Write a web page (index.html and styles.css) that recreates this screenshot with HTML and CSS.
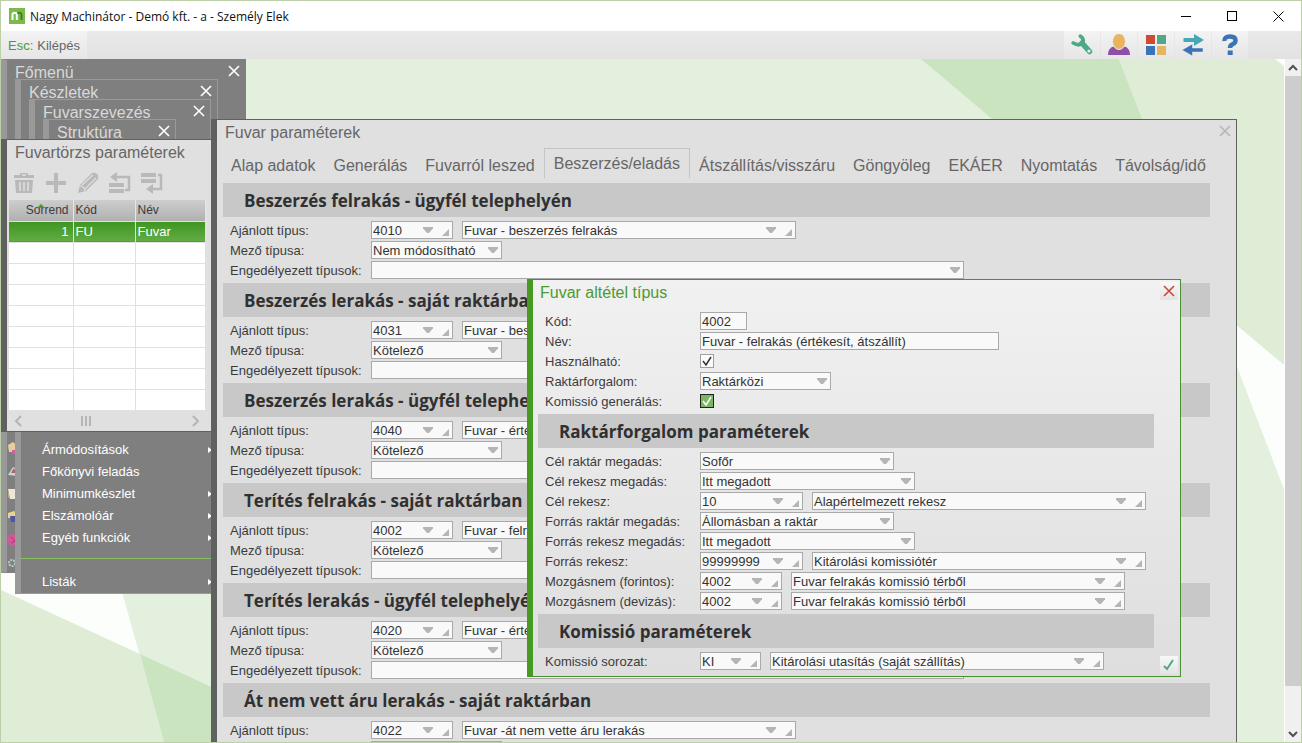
FILE: index.html
```html
<!DOCTYPE html>
<html lang="hu">
<head>
    <meta charset="UTF-8">
    <title>Nagy Machinátor - Demó kft.</title>
    <link rel="stylesheet" href="styles.css">
</head>
<body>
    <div class="app">
        <header class="titlebar">
            <svg class="logo" width="16" height="16" viewBox="0 0 16 16">
                <rect width="16" height="16" fill="#7dba4c"/>
                <path d="M3.500 12V7Q3.500 4.800 5.500 4.800Q7.800 4.800 7.800 7V12" fill="none" stroke="#fff" stroke-width="2"/>
                <path d="M8.500 5.500Q9.500 4.800 10.300 4.800Q12.500 4.800 12.500 7V12" fill="none" stroke="#3c8420" stroke-width="2"/>
            </svg>
            <span class="app-name">Nagy Machinátor - Demó kft. - a - Személy Elek</span>
            <button class="win-btn" aria-label="Kis méret"><svg width="11" height="11"><path d="M0 5.500H10" stroke="#000"/></svg></button>
            <button class="win-btn" aria-label="Teljes méret"><svg width="11" height="11"><rect x=".5" y=".5" width="9" height="9" fill="none" stroke="#000"/></svg></button>
            <button class="win-btn" aria-label="Bezárás"><svg width="11" height="11"><path d="M.5 .5L10.500 10.500M10.500 .5L.5 10.500" stroke="#000"/></svg></button>
        </header>

        <div class="toolbar">
            <button class="exit"><span class="key">Esc:</span> Kilépés</button>
            <div class="tools">
                <button class="tool" aria-label="Eszközök">
                    <svg width="22" height="22" viewBox="0 0 22 22">
                        <path d="M9.500 2.200Q13.500 5 11.500 9Q8 12.500 2.300 9" fill="none" stroke="#4fa987" stroke-width="3.800" stroke-linecap="round"/>
                        <path d="M11 9L18.500 17.500" fill="none" stroke="#4fa987" stroke-width="5.500" stroke-linecap="round"/>
                        <circle cx="18" cy="17" r="1.600" fill="#eee"/>
                    </svg>
                </button>
                <button class="tool" aria-label="Felhasználó">
                    <svg width="22" height="22" viewBox="0 0 22 22">
                        <path d="M0 21Q0 14 5.500 12.500L16.500 12.500Q22 14 22 21Z" fill="#8e4fa8"/>
                        <ellipse cx="11" cy="7.500" rx="6.500" ry="8" fill="#e9b45f" stroke="#eee"/>
                    </svg>
                </button>
                <button class="tool" aria-label="Ablakok">
                    <svg width="22" height="22" viewBox="0 0 22 22">
                        <rect x="1" y="1" width="9" height="9" fill="#cd4a33"/>
                        <rect x="12" y="1" width="9" height="9" fill="#4fa987"/>
                        <rect x="1" y="12" width="9" height="9" fill="#3b74b5"/>
                        <rect x="12" y="12" width="9" height="9" fill="#e9b45f"/>
                    </svg>
                </button>
                <button class="tool" aria-label="Váltás">
                    <svg width="22" height="22" viewBox="0 0 22 22">
                        <path d="M1.500 4H12V0L22 6L12 12V8H1.500Z" fill="#47a8b5"/>
                        <path d="M21 14H10.500V10L0 16L10.500 22V18H21Z" fill="#3b74b5" stroke="#eee" stroke-width=".5"/>
                    </svg>
                </button>
                <button class="tool" aria-label="Súgó">
                    <svg width="22" height="22" viewBox="0 0 22 22">
                        <path d="M5.500 7Q5 2.500 11 2.500Q16.500 2.500 16.500 6.500Q16.500 9 13.500 10.300Q11 11.500 11 14" fill="none" stroke="#3b74b5" stroke-width="4.500"/>
                        <rect x="8.700" y="16.500" width="5" height="4.500" fill="#3b74b5"/>
                    </svg>
                </button>
            </div>
        </div>

        <div class="workspace">
            <main class="desktop">
                <svg class="wallpaper" viewBox="0 0 1283 683" preserveAspectRatio="none">
                    <rect width="1283" height="683" fill="#fcfefb"/>
                    <path d="M0 0H1118L1380 683H163L-28 0Z" fill="#e3f0de"/>
                    <path d="M1118 0H1274L1283 7V306L1213 247Z" fill="#dfedd7"/>
                    <path d="M920 0H1118L1213 247Z" fill="#cbe4c0"/>
                    <path d="M0 531L139 595L163 683H0Z" fill="#dfedd7"/>
                    <path d="M139 595L330 683H163Z" fill="#cbe4c0"/>
                </svg>

                <section class="menu menu-main">
                    <h2>Főmenü</h2>
                    <button class="close" aria-label="Bezárás"><svg width="12" height="12"><path d="M1 1L11 11M11 1L1 11"/></svg></button>
                    <div class="menu-icons">
                        <svg width="12" height="12"><path d="M1 3L6 0L11 4V10H2Z" fill="#e5cf9a"/><path d="M5 8H12V12H5Z" fill="#d25fa5"/></svg>
                        <svg width="12" height="12"><path d="M1 10L6 2L11 4V11Z" fill="#c9d3dc"/><path d="M4 8L7 3L9 8Z" fill="#a8665a"/></svg>
                        <svg width="12" height="12"><path d="M1 1H11V11H3Z" fill="#ece7d8"/><path d="M1 1L3 11L1 9Z" fill="#c7ab75"/></svg>
                        <svg width="12" height="12"><path d="M1 2L7 0L11 3V7H1Z" fill="#e6d38c"/><path d="M3 5H12V11H4Z" fill="#4a58a5"/></svg>
                        <svg width="12" height="12"><circle cx="6" cy="6" r="6" fill="#d3589b"/><path d="M4 3L8 7L4 9" stroke="#b2346f" fill="none"/></svg>
                        <svg width="12" height="12"><circle cx="5" cy="6" r="3" fill="none" stroke="#b7c9c9" stroke-width="2" stroke-dasharray="2 1"/></svg>
                    </div>
                </section>

                <section class="menu menu-stock">
                    <h2>Készletek</h2>
                    <button class="close" aria-label="Bezárás"><svg width="12" height="12"><path d="M1 1L11 11M11 1L1 11"/></svg></button>
                    <nav>
                        <a class="sub" href="#">Ármódosítások</a>
                        <a href="#">Főkönyvi feladás</a>
                        <a class="sub" href="#">Minimumkészlet</a>
                        <a class="sub" href="#">Elszámolóár</a>
                        <a class="sub" href="#">Egyéb funkciók</a>
                        <hr>
                        <a class="sub" href="#">Listák</a>
                    </nav>
                </section>

                <section class="menu menu-freight">
                    <h2>Fuvarszevezés</h2>
                    <button class="close" aria-label="Bezárás"><svg width="12" height="12"><path d="M1 1L11 11M11 1L1 11"/></svg></button>
                </section>

                <section class="menu menu-structure">
                    <h2>Struktúra</h2>
                    <button class="close" aria-label="Bezárás"><svg width="12" height="12"><path d="M1 1L11 11M11 1L1 11"/></svg></button>
                </section>

                <section class="window list-window">
                    <h2>Fuvartörzs paraméterek</h2>
                    <div class="list-tools">
                        <button aria-label="Törlés"><svg width="22" height="22" viewBox="0 0 22 22"><path d="M7 1H15V3H21V6H1V3H7Z M2 8H20L19 21H3Z" fill="#b9b9b9"/><path d="M9 3H13M7 10V19M11 10V19M15 10V19" stroke="#dfdfdf" stroke-width="1.500"/></svg></button>
                        <button aria-label="Új"><svg width="22" height="22" viewBox="0 0 22 22"><path d="M11 1V21M1 11H21" stroke="#b9b9b9" stroke-width="4"/></svg></button>
                        <button aria-label="Módosítás"><svg width="22" height="22" viewBox="0 0 22 22"><path d="M1 21L3 13L15 1Q18 0 20 2Q22 4 21 7L9 19Z" fill="#b9b9b9"/><path d="M5 13L16 3M8 17L19 6M3 14Q7 14 8 19" fill="none" stroke="#dfdfdf" stroke-width="1.200"/></svg></button>
                        <button aria-label="Fel"><svg width="22" height="22" viewBox="0 0 22 22"><path d="M0 11H15V15H0ZM0 17H15V21H0Z" fill="#b9b9b9"/><path d="M6 5H20V18H16" fill="none" stroke="#b9b9b9" stroke-width="2.500"/><path d="M1 5L8 0V10Z" fill="#b9b9b9"/></svg></button>
                        <button aria-label="Le"><svg width="22" height="22" viewBox="0 0 22 22"><path d="M0 1H15V5H0ZM0 7H15V11H0Z" fill="#b9b9b9"/><path d="M17 3H20V17H10" fill="none" stroke="#b9b9b9" stroke-width="2.500"/><path d="M5 17L12 12V22Z" fill="#b9b9b9"/></svg></button>
                    </div>
                    <table>
                        <thead>
                            <tr><th class="num sorted">Sorrend</th><th class="code-col">Kód</th><th>Név</th></tr>
                        </thead>
                        <tbody>
                            <tr class="selected"><td class="num">1</td><td>FU</td><td>Fuvar</td></tr>
                            <tr><td></td><td></td><td></td></tr>
                            <tr><td></td><td></td><td></td></tr>
                            <tr><td></td><td></td><td></td></tr>
                            <tr><td></td><td></td><td></td></tr>
                            <tr><td></td><td></td><td></td></tr>
                            <tr><td></td><td></td><td></td></tr>
                            <tr><td></td><td></td><td></td></tr>
                            <tr><td></td><td></td><td></td></tr>
                        </tbody>
                    </table>
                    <div class="hscroll">
                        <svg width="8" height="12"><path d="M7 1L2 6L7 11"/></svg>
                        <svg class="grip" width="10" height="12"><path d="M1 1V11M5 1V11M9 1V11"/></svg>
                        <svg width="8" height="12"><path d="M1 1L6 6L1 11"/></svg>
                    </div>
                </section>

                <section class="window params-window">
                    <h2>Fuvar paraméterek</h2>
                    <button class="close" aria-label="Bezárás"><svg width="12" height="12"><path d="M1 1L11 11M11 1L1 11"/></svg></button>
                    <nav class="tabs">
                        <a href="#">Alap adatok</a>
                        <a href="#">Generálás</a>
                        <a href="#">Fuvarról leszed</a>
                        <a class="active" href="#">Beszerzés/eladás</a>
                        <a href="#">Átszállítás/visszáru</a>
                        <a href="#">Göngyöleg</a>
                        <a href="#">EKÁER</a>
                        <a href="#">Nyomtatás</a>
                        <a href="#">Távolság/idő</a>
                    </nav>
                    <form class="form">
                        <h3>Beszerzés felrakás - ügyfél telephelyén</h3>
                        <div class="rows">
                            <div class="row">
                                <label for="type1">Ajánlott típus:</label>
                                <span class="field lookup w-code"><select id="type1"><option>4010</option></select></span>
                                <span class="field lookup w-name"><select aria-label="Megnevezés"><option>Fuvar - beszerzés felrakás</option></select></span>
                            </div>
                            <div class="row">
                                <label for="mode1">Mező típusa:</label>
                                <span class="field pick w-mode"><select id="mode1"><option>Nem módosítható</option></select></span>
                            </div>
                            <div class="row">
                                <label for="allowed1">Engedélyezett típusok:</label>
                                <span class="field pick w-allowed"><select id="allowed1"><option></option></select></span>
                            </div>
                        </div>

                        <h3>Beszerzés lerakás - saját raktárban</h3>
                        <div class="rows">
                            <div class="row">
                                <label for="type2">Ajánlott típus:</label>
                                <span class="field lookup w-code"><select id="type2"><option>4031</option></select></span>
                                <span class="field lookup w-name"><select aria-label="Megnevezés"><option>Fuvar - beszerzés lerakás</option></select></span>
                            </div>
                            <div class="row">
                                <label for="mode2">Mező típusa:</label>
                                <span class="field pick w-mode"><select id="mode2"><option>Kötelező</option></select></span>
                            </div>
                            <div class="row">
                                <label for="allowed2">Engedélyezett típusok:</label>
                                <span class="field pick w-allowed"><select id="allowed2"><option></option></select></span>
                            </div>
                        </div>

                        <h3>Beszerzés lerakás - ügyfél telephelyén</h3>
                        <div class="rows">
                            <div class="row">
                                <label for="type3">Ajánlott típus:</label>
                                <span class="field lookup w-code"><select id="type3"><option>4040</option></select></span>
                                <span class="field lookup w-name"><select aria-label="Megnevezés"><option>Fuvar - értékesítés lerakás</option></select></span>
                            </div>
                            <div class="row">
                                <label for="mode3">Mező típusa:</label>
                                <span class="field pick w-mode"><select id="mode3"><option>Kötelező</option></select></span>
                            </div>
                            <div class="row">
                                <label for="allowed3">Engedélyezett típusok:</label>
                                <span class="field pick w-allowed"><select id="allowed3"><option></option></select></span>
                            </div>
                        </div>

                        <h3>Terítés felrakás - saját raktárban</h3>
                        <div class="rows">
                            <div class="row">
                                <label for="type4">Ajánlott típus:</label>
                                <span class="field lookup w-code"><select id="type4"><option>4002</option></select></span>
                                <span class="field lookup w-name"><select aria-label="Megnevezés"><option>Fuvar - felrakás (értékesít, átszállít)</option></select></span>
                            </div>
                            <div class="row">
                                <label for="mode4">Mező típusa:</label>
                                <span class="field pick w-mode"><select id="mode4"><option>Kötelező</option></select></span>
                            </div>
                            <div class="row">
                                <label for="allowed4">Engedélyezett típusok:</label>
                                <span class="field pick w-allowed"><select id="allowed4"><option></option></select></span>
                            </div>
                        </div>

                        <h3>Terítés lerakás - ügyfél telephelyén</h3>
                        <div class="rows">
                            <div class="row">
                                <label for="type5">Ajánlott típus:</label>
                                <span class="field lookup w-code"><select id="type5"><option>4020</option></select></span>
                                <span class="field lookup w-name"><select aria-label="Megnevezés"><option>Fuvar - értékesítés lerakás</option></select></span>
                            </div>
                            <div class="row">
                                <label for="mode5">Mező típusa:</label>
                                <span class="field pick w-mode"><select id="mode5"><option>Kötelező</option></select></span>
                            </div>
                            <div class="row">
                                <label for="allowed5">Engedélyezett típusok:</label>
                                <span class="field pick w-allowed"><select id="allowed5"><option></option></select></span>
                            </div>
                        </div>

                        <h3>Át nem vett áru lerakás - saját raktárban</h3>
                        <div class="rows">
                            <div class="row">
                                <label for="type6">Ajánlott típus:</label>
                                <span class="field lookup w-code"><select id="type6"><option>4022</option></select></span>
                                <span class="field lookup w-name"><select aria-label="Megnevezés"><option>Fuvar -át nem vette áru lerakás</option></select></span>
                            </div>
                            <div class="row">
                                <label for="mode6">Mező típusa:</label>
                                <span class="field pick w-mode"><select id="mode6"><option>Kötelező</option></select></span>
                            </div>
                        </div>
                    </form>
                </section>

                <section class="window popup">
                    <h2>Fuvar altétel típus</h2>
                    <button class="close" aria-label="Bezárás"><svg width="12" height="12"><path d="M1 1L11 11M11 1L1 11"/></svg></button>
                    <form class="form">
                        <div class="rows">
                            <div class="row">
                                <label for="code">Kód:</label>
                                <span class="field w-short"><input id="code" type="text" value="4002"></span>
                            </div>
                            <div class="row">
                                <label for="name">Név:</label>
                                <span class="field w-title"><input id="name" type="text" value="Fuvar - felrakás (értékesít, átszállít)"></span>
                            </div>
                            <div class="row">
                                <label for="usable">Használható:</label>
                                <span class="check"><input id="usable" type="checkbox" checked><svg width="14" height="14"><path d="M3 7L6 11L11 3"/></svg></span>
                            </div>
                            <div class="row">
                                <label for="traffic">Raktárforgalom:</label>
                                <span class="field pick w-mode"><select id="traffic"><option>Raktárközi</option></select></span>
                            </div>
                            <div class="row">
                                <label for="commission">Komissió generálás:</label>
                                <span class="check focus"><input id="commission" type="checkbox" checked><svg width="14" height="14"><path d="M3 7L6 11L11 3"/></svg></span>
                            </div>
                        </div>

                        <h3>Raktárforgalom paraméterek</h3>
                        <div class="rows">
                            <div class="row">
                                <label for="target-store">Cél raktár megadás:</label>
                                <span class="field pick w-store"><select id="target-store"><option>Sofőr</option></select></span>
                            </div>
                            <div class="row">
                                <label for="target-bin-mode">Cél rekesz megadás:</label>
                                <span class="field pick w-bin"><select id="target-bin-mode"><option>Itt megadott</option></select></span>
                            </div>
                            <div class="row">
                                <label for="target-bin">Cél rekesz:</label>
                                <span class="field lookup w-long-code"><select id="target-bin"><option>10</option></select></span>
                                <span class="field lookup w-name"><select aria-label="Megnevezés"><option>Alapértelmezett rekesz</option></select></span>
                            </div>
                            <div class="row">
                                <label for="source-store">Forrás raktár megadás:</label>
                                <span class="field pick w-store"><select id="source-store"><option>Állomásban a raktár</option></select></span>
                            </div>
                            <div class="row">
                                <label for="source-bin-mode">Forrás rekesz megadás:</label>
                                <span class="field pick w-bin"><select id="source-bin-mode"><option>Itt megadott</option></select></span>
                            </div>
                            <div class="row">
                                <label for="source-bin">Forrás rekesz:</label>
                                <span class="field lookup w-long-code"><select id="source-bin"><option>99999999</option></select></span>
                                <span class="field lookup w-name"><select aria-label="Megnevezés"><option>Kitárolási komissiótér</option></select></span>
                            </div>
                            <div class="row">
                                <label for="move-huf">Mozgásnem (forintos):</label>
                                <span class="field lookup w-code"><select id="move-huf"><option>4002</option></select></span>
                                <span class="field lookup w-name"><select aria-label="Megnevezés"><option>Fuvar felrakás komissió térből</option></select></span>
                            </div>
                            <div class="row">
                                <label for="move-fx">Mozgásnem (devizás):</label>
                                <span class="field lookup w-code"><select id="move-fx"><option>4002</option></select></span>
                                <span class="field lookup w-name"><select aria-label="Megnevezés"><option>Fuvar felrakás komissió térből</option></select></span>
                            </div>
                        </div>

                        <h3>Komissió paraméterek</h3>
                        <div class="rows">
                            <div class="row">
                                <label for="series">Komissió sorozat:</label>
                                <span class="field lookup w-series"><select id="series"><option>KI</option></select></span>
                                <span class="field lookup w-name"><select aria-label="Megnevezés"><option>Kitárolási utasítás (saját szállítás)</option></select></span>
                            </div>
                        </div>
                    </form>
                    <button class="ok" aria-label="Rendben"><svg width="12" height="12"><path d="M1 7L4 10L10 1" fill="none" stroke="#4fa987" stroke-width="2"/></svg></button>
                </section>
            </main>

            <div class="vscroll">
                <button aria-label="Fel"><svg width="10" height="8"><path d="M1 6L5 2L9 6"/></svg></button>
                <div class="track"><div class="thumb"></div></div>
                <button aria-label="Le"><svg width="10" height="8"><path d="M1 2L5 6L9 2"/></svg></button>
            </div>
        </div>
    </div>
</body>
</html>
```

FILE: styles.css
```css
* {
    box-sizing: border-box;
}
body {
    margin: 0;
    font-family: "Liberation Sans", Arial, sans-serif;
    font-size: 13px;
    color: #3c3c3c;
}
button {
    padding: 0;
    border: none;
    background: none;
    font: inherit;
    color: inherit;
    display: flex;
    align-items: center;
    justify-content: center;
}
a {
    color: inherit;
    text-decoration: none;
}
h2, h3 {
    margin: 0;
}
.app {
    display: flex;
    flex-direction: column;
    height: 100vh;
    border: 1px solid #bccfa9;
    overflow: hidden;
}

/* title bar */
.titlebar {
    display: flex;
    align-items: center;
    flex: none;
    height: 30px;
    padding-left: 8px;
    background-color: #fff;
}
.app-name {
    flex: 1;
    margin-left: 5px;
    font-family: "Open Sans", sans-serif;
    font-size: 12px;
    color: #111;
}
.win-btn {
    width: 46px;
    height: 30px;
}

/* toolbar */
.toolbar {
    display: flex;
    justify-content: space-between;
    flex: none;
    height: 28px;
    padding-right: 53px;
    background: linear-gradient(#e9e9e9, #e2e2e2);
}
.exit {
    gap: 4px;
    padding: 0 7px;
    color: #666;
    background: linear-gradient(#f3f3f3, #e6e6e6);
}
.key {
    color: #4b9a31;
}
.tools {
    display: flex;
    gap: 1px;
}
.tool {
    width: 36px;
    background: linear-gradient(#f3f3f3, #e6e6e6);
}

/* desktop */
.workspace {
    display: flex;
    flex: 1;
    min-height: 0;
}
.desktop {
    position: relative;
    flex: 1;
    overflow: hidden;
}
.wallpaper {
    position: absolute;
    width: 100%;
    height: 100%;
}

/* cascading menus */
.menu {
    position: absolute;
    background-color: #7f7f7f;
    border: 1px solid #999;
    border-left-width: 6px;
    color: #fff;
}
.menu h2 {
    padding-left: 8px;
    font-size: 16px;
    font-weight: normal;
    line-height: 26px;
    color: #d9d9d9;
}
.close {
    position: absolute;
    top: 2px;
    right: 2px;
    width: 18px;
    height: 18px;
}
.close path {
    fill: none;
    stroke: #fff;
    stroke-width: 1.6;
}
.menu-main {
    left: 0;
    top: 0;
    width: 245px;
    height: 514px;
    border-color: #7f7f7f;
    border-left-color: #999;
}
.menu-stock {
    left: 14px;
    top: 20px;
    width: 203px;
}
.menu-freight {
    left: 28px;
    top: 40px;
    width: 182px;
    height: 60px;
}
.menu-structure {
    left: 42px;
    top: 60px;
    width: 133px;
    height: 40px;
}
.menu-icons {
    display: grid;
    gap: 11px;
    padding-top: 356px;
}
.menu nav {
    padding: 333px 5px 0 21px;
    line-height: 22px;
}
.menu nav a {
    display: block;
}
.menu nav .sub::after {
    content: "";
    float: right;
    margin-top: 8px;
    border: 3px solid transparent;
    border-left: 4px solid #fff;
    border-right: 0;
}
.menu hr {
    height: 1px;
    margin: 9px -5px 12px -21px;
    border: none;
    background-color: #86c264;
}

/* windows */
.window {
    position: absolute;
    background-color: #e0e0e0;
    border: 1px solid #5f615e;
    border-left-width: 6px;
}
.window h2 {
    font-size: 16px;
    font-weight: normal;
    line-height: 26px;
    padding-left: 8px;
    color: #666;
}

.list-window {
    left: 0;
    top: 80px;
    width: 211px;
}
.list-tools {
    display: flex;
    gap: 10px;
    padding: 6px;
}
.list-window table {
    width: 197px;
    margin-left: 2px;
    border-collapse: collapse;
    table-layout: fixed;
    background-color: #fff;
}
.list-window th {
    height: 21px;
    padding: 0 2px;
    font-size: 12px;
    font-weight: normal;
    text-align: left;
    border-right: 1px solid #e6e6e6;
    background: linear-gradient(#cdcdcd, #b0b0b0);
}
.list-window td {
    height: 21px;
    padding: 0 2px;
    border: 1px solid #e0e0e0;
    border-left: none;
}
.list-window .num {
    width: 64px;
    padding-right: 4px;
    text-align: right;
}
.list-window .code-col {
    width: 62px;
}
.sorted {
    position: relative;
}
.sorted::before {
    content: "";
    position: absolute;
    top: 4px;
    left: 28px;
    border: 4px solid transparent;
    border-top: none;
    border-bottom-color: #479a21;
}
.selected td {
    color: #fff;
    background: linear-gradient(#3f9421, #62ad45);
}
.hscroll {
    display: flex;
    align-items: center;
    justify-content: space-between;
    height: 20px;
    padding: 0 11px 0 7px;
}
.hscroll path {
    fill: none;
    stroke: #b5b5b5;
    stroke-width: 2;
}
.grip {
    margin-right: 42px;
}

.params-window {
    left: 210px;
    top: 60px;
    right: 47px;
    bottom: 0;
    border-bottom: none;
    overflow: hidden;
}
.params-window .close path {
    stroke: #b5b5b5;
}
.tabs {
    display: flex;
    height: 30px;
    margin: 2px 0 5px 5px;
    font-size: 16px;
    line-height: 36px;
    color: #666;
    white-space: nowrap;
}
.tabs a {
    padding: 0 9px;
}
.tabs .active {
    line-height: 30px;
    border: 1px solid #c4c4c4;
    border-bottom: none;
}

/* forms */
.form {
    padding: 0 26px 0 6px;
}
.form h3 {
    height: 34px;
    padding-left: 21px;
    font-family: "Open Sans", sans-serif;
    font-size: 17px;
    font-weight: bold;
    line-height: 36px;
    color: #303030;
    background-color: #c8c8c8;
}
.rows {
    display: grid;
    gap: 2px;
    padding: 4px 0 4px 7px;
}
.row {
    display: flex;
    gap: 9px;
    height: 18px;
    line-height: 20px;
    white-space: nowrap;
}
.row label {
    width: 132px;
}
.field {
    position: relative;
    display: flex;
    border: 1px solid #a9a9a9;
    background-color: #f9f9f9;
}
.field select,
.field input {
    appearance: none;
    width: 100%;
    padding: 2px 1px 0;
    border: none;
    border-radius: 0;
    outline: none;
    background: none;
    font: inherit;
    line-height: 14px;
    color: #333;
}
.pick::after,
.lookup::before {
    content: "";
    position: absolute;
    top: 5px;
    right: 3px;
    width: 10px;
    height: 6px;
    background-color: #b5b5b5;
    clip-path: polygon(0 0, 100% 0, 100% 20%, 60% 100%, 40% 100%, 0 20%);
    pointer-events: none;
}
.lookup::before {
    right: 19px;
}
.lookup::after {
    content: "";
    position: absolute;
    right: 3px;
    bottom: 2px;
    width: 7px;
    height: 7px;
    background-color: #b5b5b5;
    clip-path: polygon(100% 0, 100% 100%, 0 100%);
    pointer-events: none;
}
.w-short { width: 47px; }
.w-series { width: 61px; }
.w-code { width: 82px; }
.w-long-code { width: 103px; }
.w-mode { width: 131px; }
.w-store { width: 194px; }
.w-bin { width: 215px; }
.w-title { width: 299px; }
.w-name { width: 334px; }
.w-allowed { width: 593px; }

.check {
    position: relative;
    display: flex;
    align-self: center;
    width: 14px;
    height: 14px;
}
.check input {
    appearance: none;
    width: 14px;
    height: 14px;
    margin: 0;
    border: 1px solid #a0a0a0;
    background-color: #fbfbfb;
}
.check svg {
    position: absolute;
    pointer-events: none;
}
.check path {
    fill: none;
    stroke: #333;
    stroke-width: 1.5;
}
.focus input {
    border-color: #222;
    background-color: #7cb566;
}
.focus path {
    stroke: #fff;
}

.popup {
    left: 526px;
    top: 220px;
    right: 103px;
    padding-bottom: 2px;
    border-color: #4a8f32;
    border-left-color: #479a21;
    background: linear-gradient(#f1f1f1, #dedede);
}
.popup h2 {
    padding: 0 0 2px 7px;
    color: #4b9a31;
}
.popup .form {
    padding-left: 5px;
}
.popup .row label {
    width: 146px;
}
.popup .close,
.ok {
    background: linear-gradient(#f8f8f8, #e3e3e3);
}
.popup .close path {
    stroke: #c9473c;
}
.ok {
    position: absolute;
    right: 2px;
    bottom: 2px;
    width: 18px;
    height: 18px;
}

/* page scroll bar */
.vscroll {
    display: flex;
    flex-direction: column;
    flex: none;
    width: 17px;
    border-left: 1px solid #fff;
    background-color: #f0f0f0;
}
.vscroll button {
    height: 17px;
}
.vscroll path {
    fill: none;
    stroke: #505050;
    stroke-width: 2;
}
.track {
    flex: 1;
}
.thumb {
    height: 94%;
    background-color: #cdcdcd;
}
```
